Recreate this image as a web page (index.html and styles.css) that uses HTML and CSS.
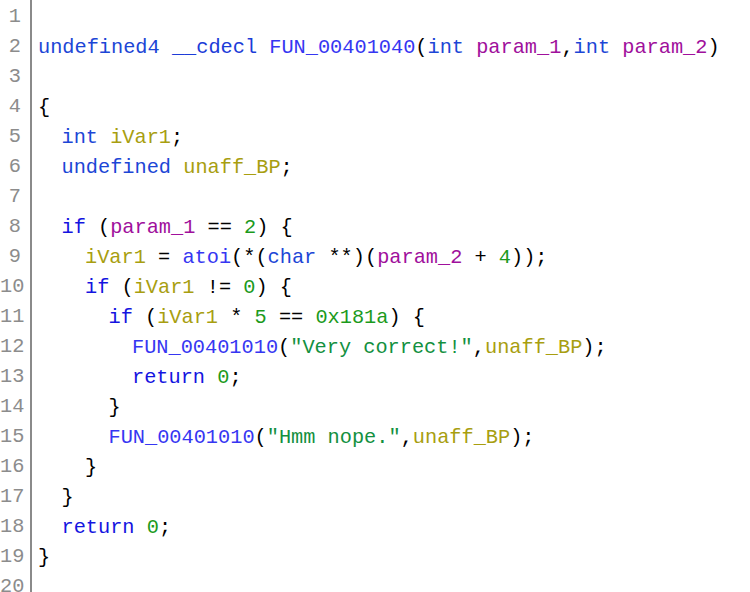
FILE: index.html
```html
<!DOCTYPE html>
<html>
<head>
<meta charset="utf-8">
<link rel="stylesheet" href="styles.css">
</head>
<body>
<div class="editor">
  <div class="gutter">
    <div class="ln">1</div><div class="ln">2</div><div class="ln">3</div><div class="ln">4</div><div class="ln">5</div>
    <div class="ln">6</div><div class="ln">7</div><div class="ln">8</div><div class="ln">9</div><div class="ln">10</div>
    <div class="ln">11</div><div class="ln">12</div><div class="ln">13</div><div class="ln">14</div><div class="ln">15</div>
    <div class="ln">16</div><div class="ln">17</div><div class="ln">18</div><div class="ln">19</div><div class="ln">20</div>
  </div>
  <div class="code">
    <div class="line"></div>
    <div class="line"><span class="ty">undefined4</span> <span class="kw2">__cdecl</span> <span class="fn">FUN_00401040</span>(<span class="ty">int</span> <span class="pa">param_1</span>,<span class="ty">int</span> <span class="pa">param_2</span>)</div>
    <div class="line"></div>
    <div class="line">{</div>
    <div class="line i1"><span class="ty">int</span> <span class="va">iVar1</span>;</div>
    <div class="line i1"><span class="ty">undefined</span> <span class="va">unaff_BP</span>;</div>
    <div class="line"></div>
    <div class="line i1"><span class="kw">if</span> (<span class="pa">param_1</span> == <span class="co">2</span>) {</div>
    <div class="line i2"><span class="va">iVar1</span> = <span class="fn">atoi</span>(*(<span class="ty">char</span> **)(<span class="pa">param_2</span> + <span class="co">4</span>));</div>
    <div class="line i2"><span class="kw">if</span> (<span class="va">iVar1</span> != <span class="co">0</span>) {</div>
    <div class="line i3"><span class="kw">if</span> (<span class="va">iVar1</span> * <span class="co">5</span> == <span class="co">0x181a</span>) {</div>
    <div class="line i4"><span class="fn">FUN_00401010</span>(<span class="st">"Very correct!"</span>,<span class="va">unaff_BP</span>);</div>
    <div class="line i4"><span class="kw">return</span> <span class="co">0</span>;</div>
    <div class="line i3">}</div>
    <div class="line i3"><span class="fn">FUN_00401010</span>(<span class="st">"Hmm nope."</span>,<span class="va">unaff_BP</span>);</div>
    <div class="line i2">}</div>
    <div class="line i1">}</div>
    <div class="line i1"><span class="kw">return</span> <span class="co">0</span>;</div>
    <div class="line">}</div>
    <div class="line"></div>
  </div>
</div>
</body>
</html>
```

FILE: styles.css
```css
html, body {
  margin: 0;
  padding: 0;
  background: #ffffff;
}
.editor {
  display: flex;
  height: 592px;
  overflow: hidden;
  font-family: "Courier New", "Nimbus Mono PS", "FreeMono", "Liberation Mono", monospace;
  font-size: 20.3px;
  line-height: 30px;
  color: #000000;
}
.gutter {
  width: 30px;
  border-right: 2px solid #8a8a8a;
  box-sizing: content-box;
  display: flex;
  flex-direction: column;
  flex: none;
  padding-top: 2px;
}
.ln {
  height: 30px;
  flex: none;
  text-align: right;
  padding-right: 9px;
  color: #8c8c8c;
}
.code {
  padding-left: 6px;
  padding-top: 3px;
  display: flex;
  flex-direction: column;
  white-space: pre;
}
.line {
  height: 30px;
  flex: none;
}
.i1 { padding-left: 23.5px; }
.i2 { padding-left: 47px; }
.i3 { padding-left: 70.5px; }
.i4 { padding-left: 94px; }
.ty { color: #1c46d6; }
.kw { color: #1414e0; }
.kw2 { color: #1c3cd8; }
.fn { color: #3636f2; }
.pa { color: #a0109c; }
.va { color: #a89e10; }
.co { color: #1c9a1c; }
.st { color: #139040; }
```
